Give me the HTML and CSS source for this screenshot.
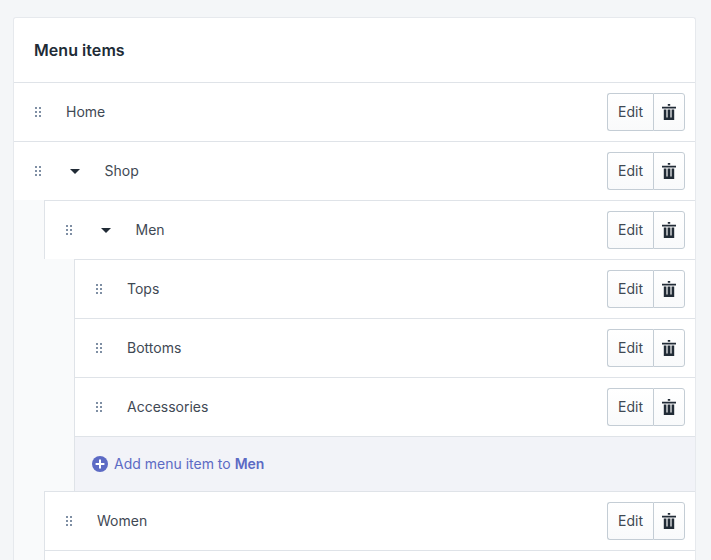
FILE: index.html
```html
<!DOCTYPE html>
<html lang="en">
<head>
<meta charset="utf-8">
<title>Menu items</title>
<link rel="stylesheet" href="styles.css">
</head>
<body>
<svg class="defs" width="0" height="0" aria-hidden="true">
  <defs>
    <symbol id="grip" viewBox="0 0 6 10">
      <g fill="#7f8fa4">
        <rect x="0" y="0" width="2" height="2"/><rect x="4" y="0" width="2" height="2"/>
        <rect x="0" y="4" width="2" height="2"/><rect x="4" y="4" width="2" height="2"/>
        <rect x="0" y="8" width="2" height="2"/><rect x="4" y="8" width="2" height="2"/>
      </g>
    </symbol>
    <symbol id="trash" viewBox="0 0 14 16">
      <path fill="#212b36" d="M5.8 0h2.4v1.8H5.8zM0 2.8h14v1.8H0zM1.8 5.6h2.6v8h1.2v-8h2.8v8h1.2v-8h2.6V16H1.8z"/>
    </symbol>
  </defs>
</svg>
<main class="card">
  <h1 class="card-title">Menu items</h1>
  <div class="row">
    <svg class="grip"><use href="#grip"/></svg>
    <span class="label label-leaf">Home</span>
    <div class="actions"><button class="btn btn-edit">Edit</button><button class="btn btn-del" aria-label="Delete"><svg class="trash"><use href="#trash"/></svg></button></div>
  </div>
  <div class="row">
    <svg class="grip"><use href="#grip"/></svg>
    <span class="caret"></span>
    <span class="label">Shop</span>
    <div class="actions"><button class="btn btn-edit">Edit</button><button class="btn btn-del" aria-label="Delete"><svg class="trash"><use href="#trash"/></svg></button></div>
  </div>
  <div class="nest">
    <div class="row">
      <svg class="grip"><use href="#grip"/></svg>
      <span class="caret"></span>
      <span class="label">Men</span>
      <div class="actions"><button class="btn btn-edit">Edit</button><button class="btn btn-del" aria-label="Delete"><svg class="trash"><use href="#trash"/></svg></button></div>
    </div>
    <div class="nest">
      <div class="row">
        <svg class="grip"><use href="#grip"/></svg>
        <span class="label label-leaf">Tops</span>
        <div class="actions"><button class="btn btn-edit">Edit</button><button class="btn btn-del" aria-label="Delete"><svg class="trash"><use href="#trash"/></svg></button></div>
      </div>
      <div class="row">
        <svg class="grip"><use href="#grip"/></svg>
        <span class="label label-leaf">Bottoms</span>
        <div class="actions"><button class="btn btn-edit">Edit</button><button class="btn btn-del" aria-label="Delete"><svg class="trash"><use href="#trash"/></svg></button></div>
      </div>
      <div class="row">
        <svg class="grip"><use href="#grip"/></svg>
        <span class="label label-leaf">Accessories</span>
        <div class="actions"><button class="btn btn-edit">Edit</button><button class="btn btn-del" aria-label="Delete"><svg class="trash"><use href="#trash"/></svg></button></div>
      </div>
      <div class="add">
        <svg class="plus" viewBox="0 0 16 16"><circle cx="8" cy="8" r="8" fill="#5c6ac4"/><path fill="#fff" d="M7 3.6h2V7h3.4v2H9v3.4H7V9H3.6V7H7z"/></svg>
        <span class="add-text">Add menu item to <b>Men</b></span>
      </div>
    </div>
    <div class="row">
      <svg class="grip"><use href="#grip"/></svg>
      <span class="label label-leaf">Women</span>
      <div class="actions"><button class="btn btn-edit">Edit</button><button class="btn btn-del" aria-label="Delete"><svg class="trash"><use href="#trash"/></svg></button></div>
    </div>
    <div class="row"></div>
  </div>
</main>
</body>
</html>
```

FILE: styles.css
```css
* { box-sizing: border-box; }
html, body { margin: 0; height: 560px; overflow: hidden; }
body {
  background: #f4f6f8;
  padding: 17px 15px 0 13px;
  font-family: Inter, "Liberation Sans", sans-serif;
  color: #212b36;
  font-size: 14px;
}
.defs { position: absolute; }
.card {
  background: #f9fafb;
  border: 1px solid #e6e9ed;
  border-bottom: 0;
  border-radius: 3px 3px 0 0;
}
.card-title {
  margin: 0;
  height: 64px;
  padding: 0 20px 1px;
  display: flex;
  align-items: center;
  background: #fff;
  border-radius: 3px 3px 0 0;
  font-size: 16px;
  font-weight: 600;
  letter-spacing: .05px;
  color: #212b36;
}
.row {
  height: 59px;
  display: flex;
  align-items: center;
  background: #fff;
  border-top: 1px solid #dfe3e8;
  padding: 0 10px 0 21px;
}
.nest {
  padding-left: 30px;
}
.nest > .row, .nest > .add {
  border-left: 1px solid #dfe3e8;
}
.grip { width: 6px; height: 10px; flex: none; }
.caret {
  flex: none;
  width: 0;
  height: 0;
  margin-left: 29px;
  border: 5px solid transparent;
  border-top-color: #212b36;
  border-bottom: 0;
}
.label {
  margin-left: 24.5px;
  padding-bottom: 2px;
  font-size: 14px;
  color: #3f4954;
}
.label-leaf { margin-left: 25px; }
.actions { margin-left: auto; display: flex; }
.btn {
  height: 38px;
  margin: 0;
  background: linear-gradient(#fff, #f9fafb);
  border: 1px solid #c4cdd5;
  font-family: inherit;
  font-size: 14px;
  color: #3f4954;
  padding: 0 0 2px;
  display: flex;
  align-items: center;
  justify-content: center;
}
.btn-edit { width: 46px; border-radius: 3px 0 0 3px; border-right: 0; }
.btn-del { width: 32px; border-radius: 0 3px 3px 0; padding: 0; }
.trash { width: 14px; height: 16px; }
.add {
  height: 55px;
  display: flex;
  align-items: center;
  background: #f2f3f8;
  border-top: 1px solid #dfe3e8;
  padding-left: 17px;
  color: #5c6ac4;
}
.plus { width: 16px; height: 16px; flex: none; }
.add-text { margin-left: 6px; padding-bottom: 2px; font-size: 14px; }
.add-text b { font-weight: 600; }
```
